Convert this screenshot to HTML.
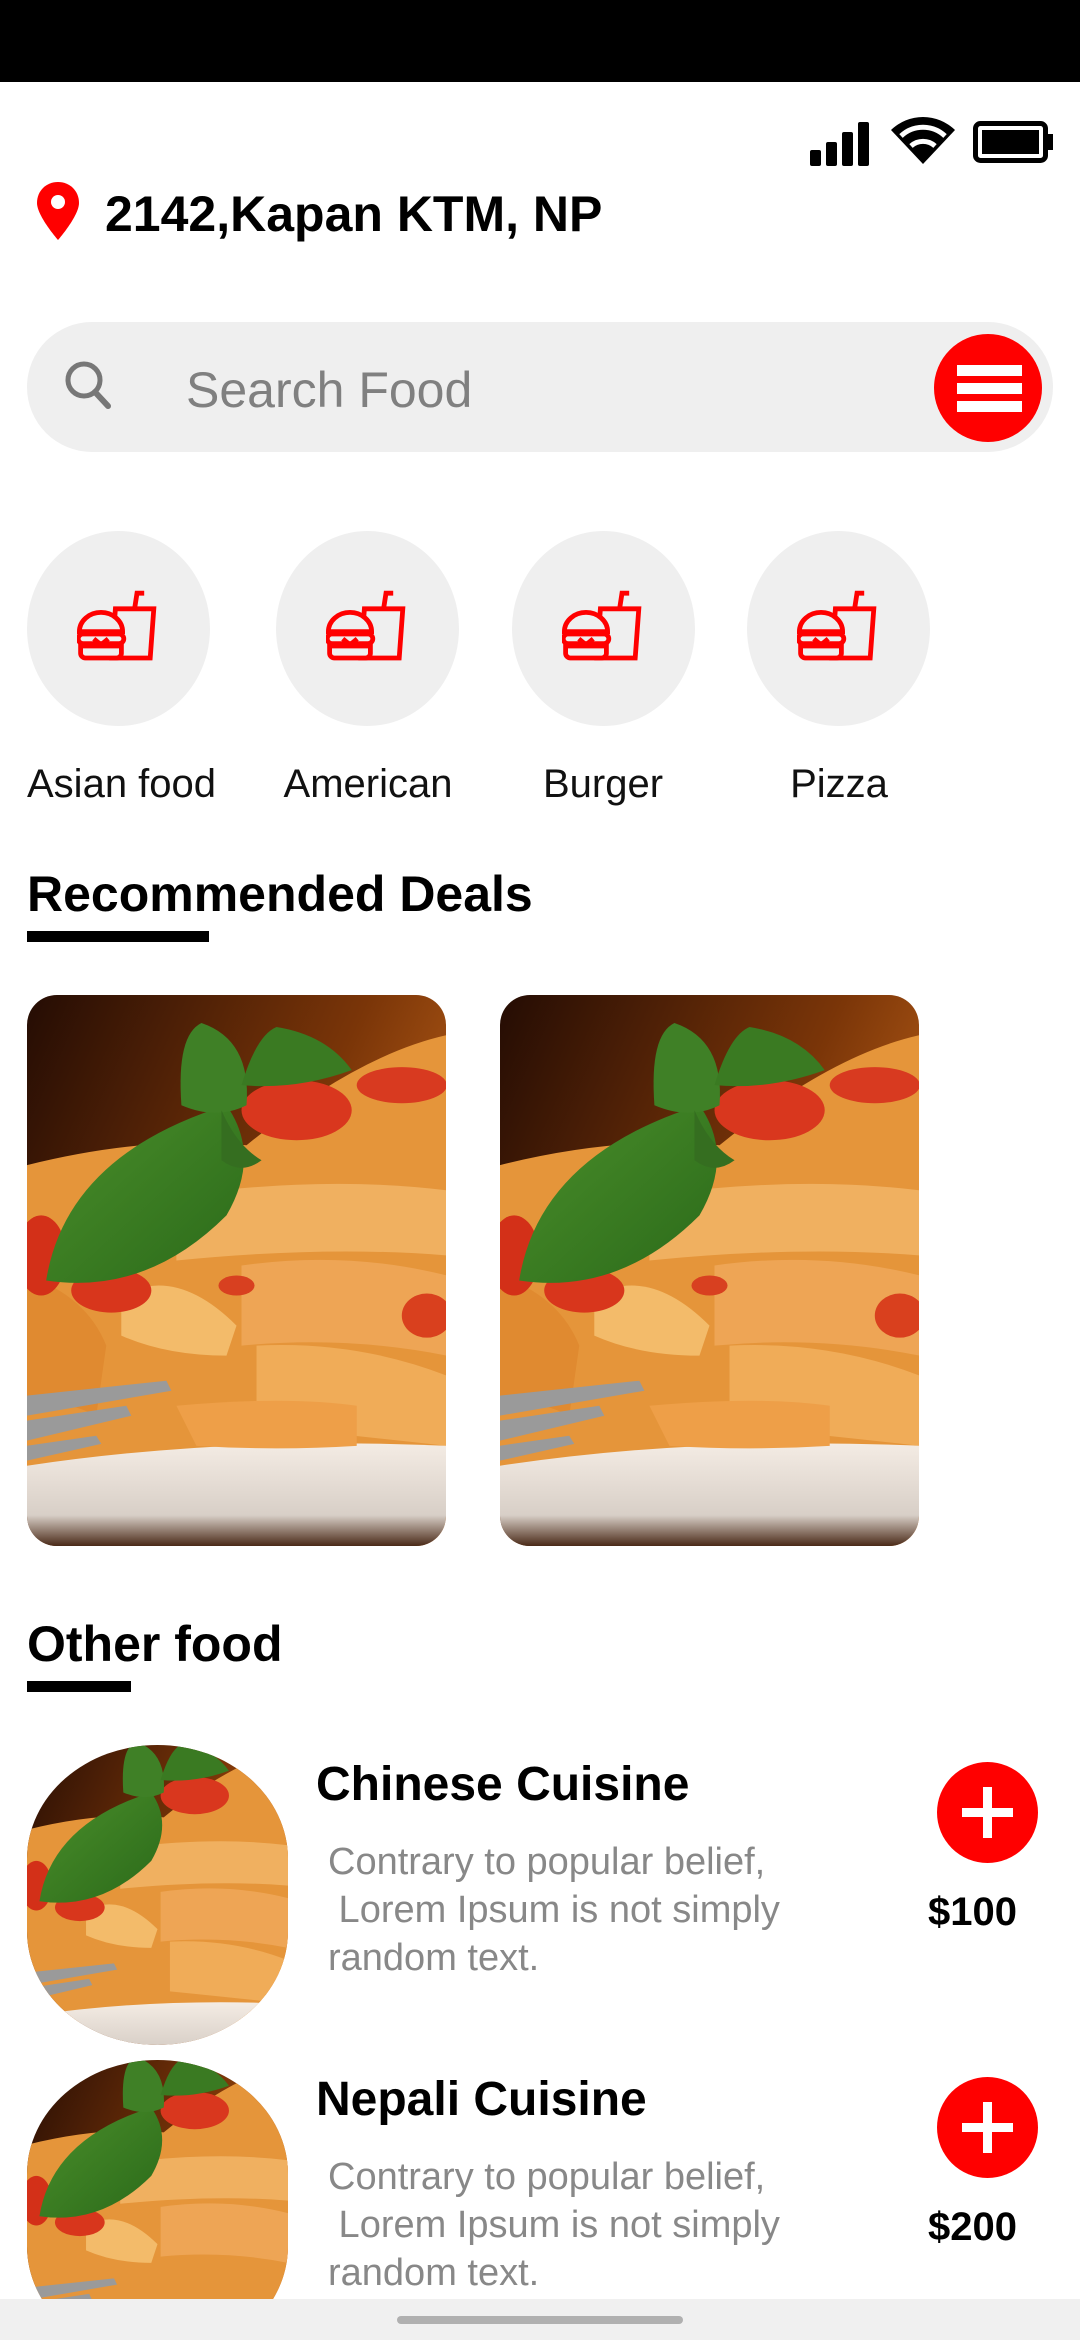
<!DOCTYPE html>
<html><head><meta charset="utf-8">
<style>
*{margin:0;padding:0;box-sizing:border-box}
html,body{width:1080px;height:2340px;overflow:hidden}
body{background:#fff;position:relative;font-family:"Liberation Sans",sans-serif}
.abs{position:absolute}
.cat{position:absolute;top:531px;width:183px;height:195px;border-radius:50%;background:#efefef}
.cat svg{position:absolute;left:50px;top:55px}
.lbl{position:absolute;top:762px;font-size:40px;color:#111;text-align:center;width:240px}
.h{position:absolute;left:27px;font-size:50px;font-weight:bold;color:#000}
.bar{position:absolute;left:27px;height:11px;background:#000}
.card{position:absolute;top:995px;width:419px;height:551px;border-radius:30px;overflow:hidden}
.thumb{position:absolute;left:27px;width:261px;height:300px;border-radius:50%/38%;overflow:hidden}
.title{position:absolute;left:316px;font-size:48px;font-weight:bold;color:#000}
.desc{position:absolute;left:328px;font-size:38px;line-height:48px;color:#888;width:560px}
.plus{position:absolute;left:937px;width:101px;height:101px;border-radius:50%;background:#f00}
.plus:before{content:"";position:absolute;left:25px;top:46px;width:51px;height:9px;background:#fff}
.plus:after{content:"";position:absolute;left:46px;top:25px;width:9px;height:51px;background:#fff}
.price{position:absolute;left:928px;font-size:40px;font-weight:bold;color:#000}
</style></head><body>
<svg width="0" height="0" style="position:absolute">
<defs>
<linearGradient id="bg" x1="0" y1="0" x2="1" y2="0.6"><stop offset="0" stop-color="#240c04"/><stop offset="0.6" stop-color="#7a3508"/><stop offset="1" stop-color="#c2651a"/></linearGradient>
<linearGradient id="pl" x1="0" y1="0" x2="0" y2="1"><stop offset="0" stop-color="#f4ece4"/><stop offset="0.7" stop-color="#d8cfc7"/><stop offset="1" stop-color="#4a2a18"/></linearGradient>
<linearGradient id="lf" x1="0" y1="0" x2="1" y2="1"><stop offset="0" stop-color="#4a8e2a"/><stop offset="1" stop-color="#2b6a1a"/></linearGradient>
</defs></svg>

<div class="abs" style="left:0;top:0;width:1080px;height:82px;background:#000"></div>
<svg class="abs" style="left:810px;top:122px" width="62" height="44" viewBox="0 0 62 44"><rect x="0" y="28" width="11" height="16" rx="2"/><rect x="16" y="20" width="11" height="24" rx="2"/><rect x="32" y="10" width="11" height="34" rx="2"/><rect x="48" y="0" width="11" height="44" rx="2"/></svg>
<svg class="abs" style="left:889px;top:114px" width="68" height="52" viewBox="0 0 68 52"><path d="M34 50 L2 16 A46 46 0 0 1 66 16 Z" fill="#000"/><path d="M12 22 A32 32 0 0 1 56 22" stroke="#fff" stroke-width="5" fill="none"/><path d="M22 32 A18 18 0 0 1 46 32" stroke="#fff" stroke-width="5" fill="none"/></svg>
<svg class="abs" style="left:973px;top:121px" width="82" height="42" viewBox="0 0 82 42"><rect x="2.5" y="2.5" width="70" height="37" rx="5" fill="none" stroke="#000" stroke-width="5"/><rect x="9" y="9" width="57" height="24" fill="#000"/><rect x="74" y="13" width="6" height="16" fill="#000"/></svg>

<svg class="abs" style="left:37px;top:182px" width="42" height="58" viewBox="0 0 42 58"><path d="M21 0C9 0 0 9 0 21 0 34 21 58 21 58S42 34 42 21C42 9 33 0 21 0Z" fill="#f00"/><circle cx="21" cy="20" r="7" fill="#fff"/></svg>
<div class="abs" style="left:105px;top:185px;font-size:50px;font-weight:bold;line-height:58px">2142,Kapan KTM, NP</div>

<div class="abs" style="left:27px;top:322px;width:1026px;height:130px;border-radius:65px;background:#efefef"></div>
<svg class="abs" style="left:62px;top:360px" width="56" height="50" viewBox="0 0 56 50"><circle cx="22" cy="20" r="16" fill="none" stroke="#777" stroke-width="5"/><path d="M33 32 L46 46" stroke="#777" stroke-width="6" stroke-linecap="round"/></svg>
<div class="abs" style="left:186px;top:360px;font-size:50px;color:#808080;line-height:60px">Search Food</div>
<div class="abs" style="left:934px;top:334px;width:108px;height:108px;border-radius:50%;background:#f00"></div>
<div class="abs" style="left:957px;top:365px;width:65px;height:11px;background:#fff"></div>
<div class="abs" style="left:957px;top:383px;width:65px;height:11px;background:#fff"></div>
<div class="abs" style="left:957px;top:401px;width:65px;height:11px;background:#fff"></div>

<div class="cat" style="left:27px"><svg width="84" height="84" viewBox="0 0 70 70" fill="none" stroke="#f00" stroke-width="4"><path d="M35 60 L38 19 H70 L67 60 Z" transform="translate(-6 0)"/><path d="M48 19 L50 6 H56" /><path d="M2 38 A18 16 0 0 1 38 38 Z" fill="#efefef"/><rect x="1" y="40" width="38" height="8" rx="4" fill="#efefef"/><path d="M3 50 H37 V56 A4 4 0 0 1 33 60 H7 A4 4 0 0 1 3 56 Z" fill="#efefef"/><path d="M14 44 L20 49 L26 44"/></svg></div>
<div class="cat" style="left:276px"><svg width="84" height="84" viewBox="0 0 70 70" fill="none" stroke="#f00" stroke-width="4"><path d="M35 60 L38 19 H70 L67 60 Z" transform="translate(-6 0)"/><path d="M48 19 L50 6 H56" /><path d="M2 38 A18 16 0 0 1 38 38 Z" fill="#efefef"/><rect x="1" y="40" width="38" height="8" rx="4" fill="#efefef"/><path d="M3 50 H37 V56 A4 4 0 0 1 33 60 H7 A4 4 0 0 1 3 56 Z" fill="#efefef"/><path d="M14 44 L20 49 L26 44"/></svg></div>
<div class="cat" style="left:512px"><svg width="84" height="84" viewBox="0 0 70 70" fill="none" stroke="#f00" stroke-width="4"><path d="M35 60 L38 19 H70 L67 60 Z" transform="translate(-6 0)"/><path d="M48 19 L50 6 H56" /><path d="M2 38 A18 16 0 0 1 38 38 Z" fill="#efefef"/><rect x="1" y="40" width="38" height="8" rx="4" fill="#efefef"/><path d="M3 50 H37 V56 A4 4 0 0 1 33 60 H7 A4 4 0 0 1 3 56 Z" fill="#efefef"/><path d="M14 44 L20 49 L26 44"/></svg></div>
<div class="cat" style="left:747px"><svg width="84" height="84" viewBox="0 0 70 70" fill="none" stroke="#f00" stroke-width="4"><path d="M35 60 L38 19 H70 L67 60 Z" transform="translate(-6 0)"/><path d="M48 19 L50 6 H56" /><path d="M2 38 A18 16 0 0 1 38 38 Z" fill="#efefef"/><rect x="1" y="40" width="38" height="8" rx="4" fill="#efefef"/><path d="M3 50 H37 V56 A4 4 0 0 1 33 60 H7 A4 4 0 0 1 3 56 Z" fill="#efefef"/><path d="M14 44 L20 49 L26 44"/></svg></div>
<div class="lbl" style="left:27px;width:auto">Asian food</div>
<div class="lbl" style="left:248px">American</div>
<div class="lbl" style="left:483px">Burger</div>
<div class="lbl" style="left:719px">Pizza</div>

<div class="h" style="top:865px">Recommended Deals</div>
<div class="bar" style="top:931px;width:182px"></div>

<div class="card" style="left:27px"><svg width="419" height="551" viewBox="0 0 420 550" preserveAspectRatio="xMidYMid slice">
<rect width="420" height="550" fill="url(#bg)"/>
<path d="M0 170 Q120 140 220 150 Q330 60 420 40 V480 H0Z" fill="#e5953a"/>
<path d="M150 200 Q300 180 420 195 V260 Q300 250 150 265Z" fill="#f0b060"/>
<path d="M215 270 Q320 255 420 280 V360 Q320 340 215 350Z" fill="#eea555"/>
<path d="M95 300 Q150 270 210 330 L200 360 Q140 360 95 340Z" fill="#f3bb6a"/>
<path d="M230 350 Q330 345 420 380 V450 Q330 440 230 430Z" fill="#f0ac58"/>
<path d="M0 280 Q60 300 80 350 L70 420 Q30 400 0 410Z" fill="#e08a30"/>
<ellipse cx="85" cy="295" rx="40" ry="22" fill="#d8361c"/>
<ellipse cx="270" cy="115" rx="55" ry="30" fill="#d9371e"/>
<ellipse cx="375" cy="90" rx="45" ry="18" fill="#d83a20"/>
<ellipse cx="15" cy="260" rx="25" ry="40" fill="#d33018"/>
<ellipse cx="400" cy="320" rx="25" ry="22" fill="#d9401e"/>
<ellipse cx="210" cy="290" rx="18" ry="10" fill="#d84020"/>
<path d="M20 285 Q40 160 200 110 Q235 160 200 220 Q120 300 20 285Z" fill="url(#lf)"/>
<path d="M155 110 Q150 40 175 28 Q225 45 220 110 Q190 125 155 110Z" fill="#3f8026"/>
<path d="M215 90 Q230 40 250 32 Q300 40 325 75 Q270 95 215 90Z" fill="#3a7a22"/>
<path d="M195 115 Q210 150 235 165 Q215 180 195 165Z" fill="#356e20"/>
<path d="M0 400 L140 385 L145 395 L0 420Z M0 425 L100 410 L105 420 L0 445Z M0 450 L70 440 L75 448 L0 465Z" fill="#9a9a9a"/>
<path d="M0 470 Q200 440 420 450 V550 H0Z" fill="url(#pl)"/>
<path d="M150 410 Q260 400 330 410 L330 450 Q250 455 170 450Z" fill="#ee9f48"/>
</svg></div>
<div class="card" style="left:500px"><svg width="419" height="551" viewBox="0 0 420 550" preserveAspectRatio="xMidYMid slice">
<rect width="420" height="550" fill="url(#bg)"/>
<path d="M0 170 Q120 140 220 150 Q330 60 420 40 V480 H0Z" fill="#e5953a"/>
<path d="M150 200 Q300 180 420 195 V260 Q300 250 150 265Z" fill="#f0b060"/>
<path d="M215 270 Q320 255 420 280 V360 Q320 340 215 350Z" fill="#eea555"/>
<path d="M95 300 Q150 270 210 330 L200 360 Q140 360 95 340Z" fill="#f3bb6a"/>
<path d="M230 350 Q330 345 420 380 V450 Q330 440 230 430Z" fill="#f0ac58"/>
<path d="M0 280 Q60 300 80 350 L70 420 Q30 400 0 410Z" fill="#e08a30"/>
<ellipse cx="85" cy="295" rx="40" ry="22" fill="#d8361c"/>
<ellipse cx="270" cy="115" rx="55" ry="30" fill="#d9371e"/>
<ellipse cx="375" cy="90" rx="45" ry="18" fill="#d83a20"/>
<ellipse cx="15" cy="260" rx="25" ry="40" fill="#d33018"/>
<ellipse cx="400" cy="320" rx="25" ry="22" fill="#d9401e"/>
<ellipse cx="210" cy="290" rx="18" ry="10" fill="#d84020"/>
<path d="M20 285 Q40 160 200 110 Q235 160 200 220 Q120 300 20 285Z" fill="url(#lf)"/>
<path d="M155 110 Q150 40 175 28 Q225 45 220 110 Q190 125 155 110Z" fill="#3f8026"/>
<path d="M215 90 Q230 40 250 32 Q300 40 325 75 Q270 95 215 90Z" fill="#3a7a22"/>
<path d="M195 115 Q210 150 235 165 Q215 180 195 165Z" fill="#356e20"/>
<path d="M0 400 L140 385 L145 395 L0 420Z M0 425 L100 410 L105 420 L0 445Z M0 450 L70 440 L75 448 L0 465Z" fill="#9a9a9a"/>
<path d="M0 470 Q200 440 420 450 V550 H0Z" fill="url(#pl)"/>
<path d="M150 410 Q260 400 330 410 L330 450 Q250 455 170 450Z" fill="#ee9f48"/>
</svg></div>

<div class="h" style="top:1615px">Other food</div>
<div class="bar" style="top:1681px;width:104px"></div>

<div class="thumb" style="top:1745px"><svg width="261" height="300" viewBox="0 0 420 550" preserveAspectRatio="xMidYMid slice">
<rect width="420" height="550" fill="url(#bg)"/>
<path d="M0 170 Q120 140 220 150 Q330 60 420 40 V480 H0Z" fill="#e5953a"/>
<path d="M150 200 Q300 180 420 195 V260 Q300 250 150 265Z" fill="#f0b060"/>
<path d="M215 270 Q320 255 420 280 V360 Q320 340 215 350Z" fill="#eea555"/>
<path d="M95 300 Q150 270 210 330 L200 360 Q140 360 95 340Z" fill="#f3bb6a"/>
<path d="M230 350 Q330 345 420 380 V450 Q330 440 230 430Z" fill="#f0ac58"/>
<ellipse cx="85" cy="295" rx="40" ry="22" fill="#d8361c"/>
<ellipse cx="270" cy="115" rx="55" ry="30" fill="#d9371e"/>
<ellipse cx="15" cy="260" rx="25" ry="40" fill="#d33018"/>
<path d="M20 285 Q40 160 200 110 Q235 160 200 220 Q120 300 20 285Z" fill="url(#lf)"/>
<path d="M155 110 Q150 40 175 28 Q225 45 220 110 Q190 125 155 110Z" fill="#3f8026"/>
<path d="M215 90 Q230 40 250 32 Q300 40 325 75 Q270 95 215 90Z" fill="#3a7a22"/>
<path d="M0 400 L140 385 L145 395 L0 420Z M0 425 L100 410 L105 420 L0 445Z" fill="#9a9a9a"/>
<path d="M0 470 Q200 440 420 450 V550 H0Z" fill="url(#pl)"/>
</svg></div>
<div class="title" style="top:1757px">Chinese Cuisine</div>
<div class="desc" style="top:1838px">Contrary to popular belief,<br>&nbsp;Lorem Ipsum is not simply<br>random text.</div>
<div class="plus" style="top:1762px"></div>
<div class="price" style="top:1890px">$100</div>

<div class="abs" style="left:0;top:2060px;width:1080px;height:239px;overflow:hidden">
<div class="thumb" style="top:0"><svg width="261" height="300" viewBox="0 0 420 550" preserveAspectRatio="xMidYMid slice">
<rect width="420" height="550" fill="url(#bg)"/>
<path d="M0 170 Q120 140 220 150 Q330 60 420 40 V480 H0Z" fill="#e5953a"/>
<path d="M150 200 Q300 180 420 195 V260 Q300 250 150 265Z" fill="#f0b060"/>
<path d="M215 270 Q320 255 420 280 V360 Q320 340 215 350Z" fill="#eea555"/>
<path d="M95 300 Q150 270 210 330 L200 360 Q140 360 95 340Z" fill="#f3bb6a"/>
<ellipse cx="85" cy="295" rx="40" ry="22" fill="#d8361c"/>
<ellipse cx="270" cy="115" rx="55" ry="30" fill="#d9371e"/>
<ellipse cx="15" cy="260" rx="25" ry="40" fill="#d33018"/>
<path d="M20 285 Q40 160 200 110 Q235 160 200 220 Q120 300 20 285Z" fill="url(#lf)"/>
<path d="M155 110 Q150 40 175 28 Q225 45 220 110 Q190 125 155 110Z" fill="#3f8026"/>
<path d="M215 90 Q230 40 250 32 Q300 40 325 75 Q270 95 215 90Z" fill="#3a7a22"/>
<path d="M0 400 L140 385 L145 395 L0 420Z M0 425 L100 410 L105 420 L0 445Z" fill="#9a9a9a"/>
<path d="M0 470 Q200 440 420 450 V550 H0Z" fill="url(#pl)"/>
</svg></div>
</div>
<div class="title" style="top:2072px">Nepali Cuisine</div>
<div class="desc" style="top:2153px">Contrary to popular belief,<br>&nbsp;Lorem Ipsum is not simply<br>random text.</div>
<div class="plus" style="top:2077px"></div>
<div class="price" style="top:2205px">$200</div>

<div class="abs" style="left:0;top:2299px;width:1080px;height:41px;background:#f0f0f0"></div>
<div class="abs" style="left:397px;top:2316px;width:286px;height:8px;border-radius:4px;background:#b0b0b0"></div>
</body></html>
